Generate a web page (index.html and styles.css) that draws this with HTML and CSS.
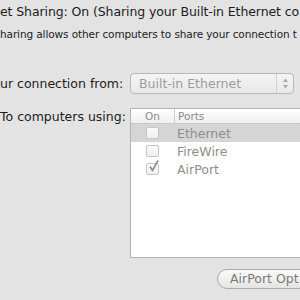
FILE: index.html
```html
<!DOCTYPE html>
<html lang="en">
<head>
    <meta charset="UTF-8">
    <title>Internet Sharing</title>
    <link rel="stylesheet" href="styles.css">
</head>
<body>
    <div class="sharing_pane">
        <h1 class="title">et Sharing: On (Sharing your Built-in Ethernet co</h1>
        <p class="desc">haring allows other computers to share your connection t</p>

        <div class="form_row from_row">
            <label class="row_label">ur connection from:</label>
            <div class="popup">
                <span>Built-in Ethernet</span>
                <span class="popup_arrows">
                    <svg width="7" height="11" viewBox="0 0 7 11">
                        <path d="M3.5 0.5 L6 4 L1 4 Z" fill="#a8a8a8"/>
                        <path d="M3.5 10.5 L6 7 L1 7 Z" fill="#a8a8a8"/>
                    </svg>
                </span>
            </div>
        </div>

        <div class="form_row using_row">
            <label class="row_label">To computers using:</label>
            <div class="ports_table">
                <div class="table_head">
                    <span class="col_on">On</span>
                    <span class="col_port">Ports</span>
                </div>
                <div class="port_row selected">
                    <span class="col_on"><span class="checkbox"></span></span>
                    <span class="col_port">Ethernet</span>
                </div>
                <div class="port_row">
                    <span class="col_on"><span class="checkbox"></span></span>
                    <span class="col_port">FireWire</span>
                </div>
                <div class="port_row">
                    <span class="col_on">
                        <span class="checkbox">
                            <svg width="13" height="13" viewBox="0 0 13 13">
                                <path d="M3 6.5 L5.5 10.5 L11 0.5" fill="none" stroke="#8c8c8c" stroke-width="1.6"/>
                            </svg>
                        </span>
                    </span>
                    <span class="col_port">AirPort</span>
                </div>
            </div>
        </div>

        <div class="button_row">
            <button class="options_btn">AirPort Opt</button>
        </div>
    </div>
</body>
</html>
```

FILE: styles.css
```css
* {
    margin: 0;
    padding: 0;
    box-sizing: border-box;
}

body {
    width: 300px;
    height: 300px;
    overflow: hidden;
    background-color: #e3e3e3;
    font-family: "DejaVu Sans", "Liberation Sans", sans-serif;
    color: #1c1c1c;
}

.sharing_pane {
    width: 300px;
}

.title {
    font-size: 12.5px;
    font-weight: normal;
    white-space: nowrap;
    letter-spacing: -0.1px;
    padding-top: 4px;
    line-height: 15px;
}

.desc {
    font-size: 10.5px;
    white-space: nowrap;
    letter-spacing: -0.1px;
    margin-top: 9px;
    line-height: 13px;
}

.form_row {
    display: grid;
    grid-template-columns: 130px 1fr;
}

.row_label {
    font-size: 12.5px;
    white-space: nowrap;
    text-align: right;
    padding-right: 7px;
    line-height: 15px;
}

.from_row {
    margin-top: 32px;
    height: 21px;
    align-items: center;
}

.popup {
    width: 164px;
    height: 21px;
    display: flex;
    align-items: center;
    justify-content: space-between;
    border: 1px solid #b9b9b9;
    border-radius: 4px;
    background: linear-gradient(#f4f4f4, #e9e9e9);
    color: #9c9c9c;
    font-size: 12.5px;
    padding-left: 8px;
}

.popup_arrows {
    width: 17px;
    height: 19px;
    border-left: 1px solid #d0d0d0;
    display: flex;
    align-items: center;
    justify-content: center;
}

.using_row {
    margin-top: 14px;
}

.using_row .row_label {
    padding-top: 1px;
}

.ports_table {
    width: 180px;
    height: 150px;
    background-color: white;
    border: 1px solid #b4b4b4;
    color: #8e8e8e;
    font-size: 12.5px;
}

.table_head {
    height: 15px;
    display: flex;
    align-items: center;
    background: linear-gradient(#ffffff, #efefef);
    border-bottom: 1px solid #c8c8c8;
    font-size: 10.5px;
    color: #8a8a8a;
}

.table_head .col_port {
    border-left: 1px solid #cfcfcf;
    height: 14px;
    line-height: 14px;
    padding-left: 3px;
}

.col_on {
    width: 43px;
    display: flex;
    justify-content: center;
}

.port_row {
    height: 18px;
    display: flex;
    align-items: center;
}

.port_row .col_port {
    padding-left: 3px;
}

.port_row.selected {
    background-color: #d5d5d5;
}

.checkbox {
    width: 13px;
    height: 12px;
    border: 1px solid #c6c6c6;
    border-radius: 2px;
    background: linear-gradient(#fbfbfb, #efefef);
    position: relative;
}

.checkbox svg {
    position: absolute;
    left: 0;
    top: -4px;
}

.button_row {
    padding-left: 217px;
    margin-top: 10px;
}

.options_btn {
    height: 20px;
    width: 100px;
    white-space: nowrap;
    border: 1px solid #a9a9a9;
    border-radius: 10px;
    background: linear-gradient(#fbfbfb, #e4e4e4);
    color: #7a7a7a;
    font-family: "DejaVu Sans", "Liberation Sans", sans-serif;
    font-size: 12.5px;
    text-align: left;
    padding-left: 12px;
}
```
